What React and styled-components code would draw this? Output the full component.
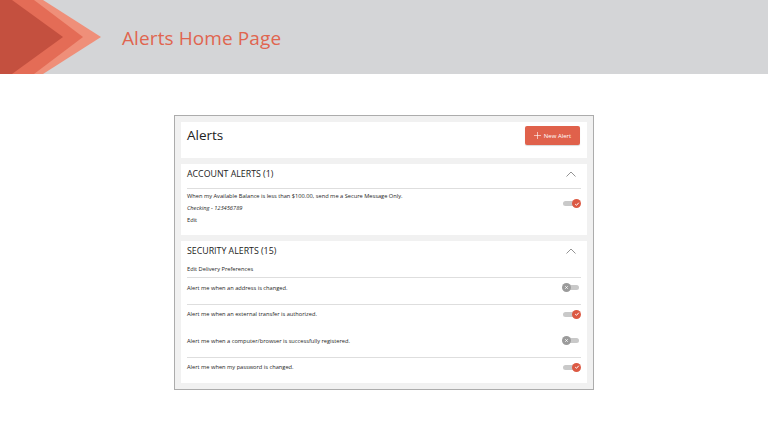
import React from 'react'
import styled, { createGlobalStyle } from 'styled-components'

const Global = createGlobalStyle`
    html, body {
        margin: 0;
        padding: 0;
        background: #fff;
        font-family: "Open Sans", "Liberation Sans", sans-serif;
    }
`

const Banner = styled.header`
    height: 74px;
    background: #d4d5d7;
    display: flex;
    align-items: center;
    overflow: hidden;
`
const Logo = styled.svg`
    flex: none;
    width: 102px;
    height: 74px;
`
const PageTitle = styled.h1`
    margin: 0 0 0 20px;
    font-size: 19px;
    font-weight: 400;
    color: #e0654f;
    letter-spacing: 0.1px;
    padding-top: 2px;
`

const Main = styled.main`
    display: flex;
    justify-content: center;
    padding-top: 41px;
`
const Frame = styled.div`
    width: 406px;
    padding: 6px;
    background: #f1f1f1;
    border: 1px solid #acacac;
    display: flex;
    flex-direction: column;
    gap: 6px;
`
const Panel = styled.section`
    background: #fff;
    padding: 0 6px;
`
const TopBar = styled(Panel)`
    height: 36px;
    box-sizing: border-box;
    padding-top: 4px;
    display: flex;
    align-items: flex-start;
    justify-content: space-between;
`
const Heading = styled.h2`
    margin: 0;
    font-size: 13.5px;
    line-height: 19px;
    font-weight: 400;
    color: #222;
`
const NewButton = styled.button`
    width: 55px;
    height: 19px;
    border: none;
    border-radius: 2px;
    background: #e0614b;
    color: #fff;
    font-family: inherit;
    font-size: 6px;
    display: flex;
    align-items: center;
    justify-content: center;
    gap: 3px;
    padding: 0;
    margin-right: 1px;
    box-shadow: 0 1px 1px rgba(0,0,0,0.15);
`
const SectionHead = styled.div`
    height: 24px;
    box-sizing: border-box;
    padding-bottom: 4px;
    display: flex;
    align-items: center;
    justify-content: space-between;
`
const SectionTitle = styled.h3`
    margin: 0;
    font-size: 8.8px;
    font-weight: 400;
    color: #222;
`
const Chevron = styled.svg`
    width: 10px;
    height: 6px;
    margin-right: 5px;
`
const Divider = styled.hr`
    margin: 0;
    border: none;
    border-top: 1px solid #dedede;
`
const Text = styled.div`
    font-size: 5.7px;
    color: #262626;
    font-style: ${p => (p.$italic ? 'italic' : 'normal')};
    line-height: 12px;
`
const AccountBody = styled.div`
    display: flex;
    align-items: flex-start;
    justify-content: space-between;
    padding: 1px 0 9px;
`
const Lines = styled.div`
    display: flex;
    flex-direction: column;
`
const Prefs = styled(Text)`
    line-height: 8px;
    padding: 0 0 4px;
`
const Row = styled.div`
    height: 26.5px;
    box-sizing: border-box;
    padding-bottom: 6px;
    display: flex;
    align-items: center;
    justify-content: space-between;
    border-top: ${p => (p.$line ? '1px solid #dedede' : '1px solid transparent')};
`
const Track = styled.div`
    position: relative;
    width: 15px;
    height: 5px;
    border-radius: 3px;
    background: #c9c9c9;
    margin-top: ${p => p.$top || '0'};
    margin-right: ${p => (p.$on ? '3px' : '2px')};
`
const Knob = styled.span`
    position: absolute;
    top: -2px;
    ${p => (p.$on ? 'right: -3px;' : 'left: -2px;')}
    width: 9px;
    height: 9px;
    border-radius: 50%;
    background: ${p => (p.$on ? '#dc5943' : '#9b9b9b')};
    display: flex;
    align-items: center;
    justify-content: center;
`

const Toggle = ({ on, top }) => (
    <Track $on={on} $top={top}>
        <Knob $on={on}>
            {on ? (
                <svg width="6" height="6" viewBox="0 0 6 6">
                    <path d="M1.2 3.1 L2.5 4.3 L4.8 1.7" fill="none" stroke="#fff" strokeWidth="1" />
                </svg>
            ) : (
                <svg width="5" height="5" viewBox="0 0 5 5">
                    <path d="M1.3 1.3 L3.7 3.7 M3.7 1.3 L1.3 3.7" stroke="#fff" strokeWidth="0.9" />
                </svg>
            )}
        </Knob>
    </Track>
)

const Up = () => (
    <Chevron viewBox="0 0 10 6">
        <path d="M0.5 5.5 L5 1 L9.5 5.5" fill="none" stroke="#777" strokeWidth="0.8" />
    </Chevron>
)

const securityAlerts = [
    { text: 'Alert me when an address is changed.', on: false, line: true },
    { text: 'Alert me when an external transfer is authorized.', on: true, line: true },
    { text: 'Alert me when a computer/browser is successfully registered.', on: false, line: false },
    { text: 'Alert me when my password is changed.', on: true, line: true },
]

const App = () => {
    return (
        <>
            <Global />
            <Banner>
                <Logo viewBox="0 0 102 74">
                    <polygon points="0,0 43,0 101,37 43,74 0,74" fill="#ef8f79" />
                    <polygon points="0,0 34,0 83,37 34,74 0,74" fill="#e46c56" />
                    <polygon points="0,0 12,0 63,37 12,74 0,74" fill="#c4503f" />
                </Logo>
                <PageTitle>Alerts Home Page</PageTitle>
            </Banner>
            <Main>
                <Frame>
                    <TopBar>
                        <Heading>Alerts</Heading>
                        <NewButton>
                            <svg width="7" height="7" viewBox="0 0 7 7">
                                <path d="M3.5 0 V7 M0 3.5 H7" stroke="#fff" strokeWidth="0.6" />
                            </svg>
                            New Alert
                        </NewButton>
                    </TopBar>
                    <Panel>
                        <SectionHead>
                            <SectionTitle>ACCOUNT ALERTS (1)</SectionTitle>
                            <Up />
                        </SectionHead>
                        <Divider />
                        <AccountBody>
                            <Lines>
                                <Text>When my Available Balance is less than $100.00, send me a Secure Message Only.</Text>
                                <Text $italic>Checking - 123456789</Text>
                                <Text>Edit</Text>
                            </Lines>
                            <Toggle on top="11px" />
                        </AccountBody>
                    </Panel>
                    <Panel>
                        <SectionHead>
                            <SectionTitle>SECURITY ALERTS (15)</SectionTitle>
                            <Up />
                        </SectionHead>
                        <Prefs>Edit Delivery Preferences</Prefs>
                        {securityAlerts.map(a => (
                            <Row key={a.text} $line={a.line}>
                                <Text>{a.text}</Text>
                                <Toggle on={a.on} />
                            </Row>
                        ))}
                    </Panel>
                </Frame>
            </Main>
        </>
    )
}

export default App
